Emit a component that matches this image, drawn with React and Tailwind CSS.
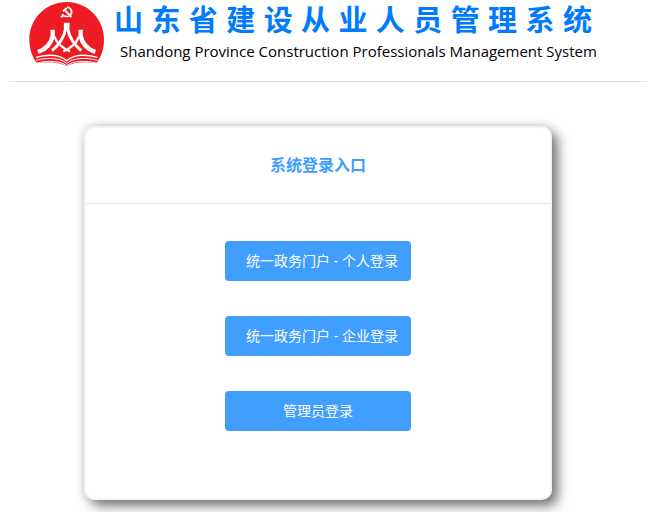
function Logo() {
  return (
    <svg viewBox="27 3 228 198" className="h-[66px] w-[76px] shrink-0" aria-hidden="true">
      <path d="M51 190C36 170 28 146 28 118C28 56 78 6 140 6S252 56 252 118C252 146 244 170 229 190C195 184 160 187 140 199C120 187 85 184 51 190Z" fill="#ed1c24" />
      <g fill="none" stroke="#fff">
        <path d="M141 21C156 24 159 40 149 47C142 52 132 49 126 43" strokeWidth="5" />
        <path d="M129 34L140 24M133 29L154 51M129 47L123 52" strokeWidth="6" />
        <path d="M136 68V88C134 108 118 134 96 152M144 68V88C146 108 162 134 184 152" strokeWidth="9" />
        <path d="M98 89V108C94 128 80 147 54 156M182 89V108C186 128 200 147 226 156" strokeWidth="13" />
        <path d="M103 110C110 128 126 144 150 154M177 110C170 128 154 144 130 154" strokeWidth="7" />
        <path d="M48 172C85 162 120 165 140 182C160 165 195 162 232 172" strokeWidth="4" />
        <path d="M48 181C85 171 120 174 140 190C160 174 195 171 232 181" strokeWidth="3" />
        <path d="M48 190C85 180 120 183 140 197C160 183 195 180 232 190" strokeWidth="3" />
      </g>
    </svg>
  )
}

const entries = [
  { label: '统一政务门户 - 个人登录', indent: true },
  { label: '统一政务门户 - 企业登录', indent: true },
  { label: '管理员登录' },
]

export default function App() {
  return (
    <div className="pr-[7px] pb-3 pl-[9px] font-['Noto_Sans','Noto_Sans_CJK_SC',sans-serif]">
      <header className="flex h-[82px] items-start gap-[9px] border-b border-[#e4e4e4] pt-px pl-5">
        <Logo />
        <div className="whitespace-nowrap">
          <h1 className="font-['Liberation_Sans','Noto_Sans_CJK_SC',sans-serif] text-[29px] leading-10 font-bold tracking-[0.29em] text-[#007bff]">
            山东省建设从业人员管理系统
          </h1>
          <p className="pl-1.5 font-['Open_Sans',sans-serif] text-[15px] leading-5 text-black">
            Shandong Province Construction Professionals Management System
          </p>
        </div>
      </header>

      <div className="pt-11 pr-5">
        <main className="mx-auto w-[468px] max-w-full rounded-[10px] border-2 border-[#f4f4f4] bg-white shadow-[6px_6px_12px_#777,-1px_-1px_10px_#ddd]">
          <h2 className="border-b border-[#e9e9e9] pt-[25px] pb-[26px] text-center text-base leading-6 font-bold text-[#409eff]">
            系统登录入口
          </h2>
          <div className="flex flex-col items-center gap-[35px] pt-[37px] pb-[67px]">
            {entries.map(e => (
              <button
                key={e.label}
                type="button"
                className={`h-10 w-[186px] rounded bg-[#409eff] text-sm whitespace-nowrap text-white ${e.indent ? 'pl-2' : ''}`}
              >
                {e.label}
              </button>
            ))}
          </div>
        </main>
      </div>
    </div>
  )
}
